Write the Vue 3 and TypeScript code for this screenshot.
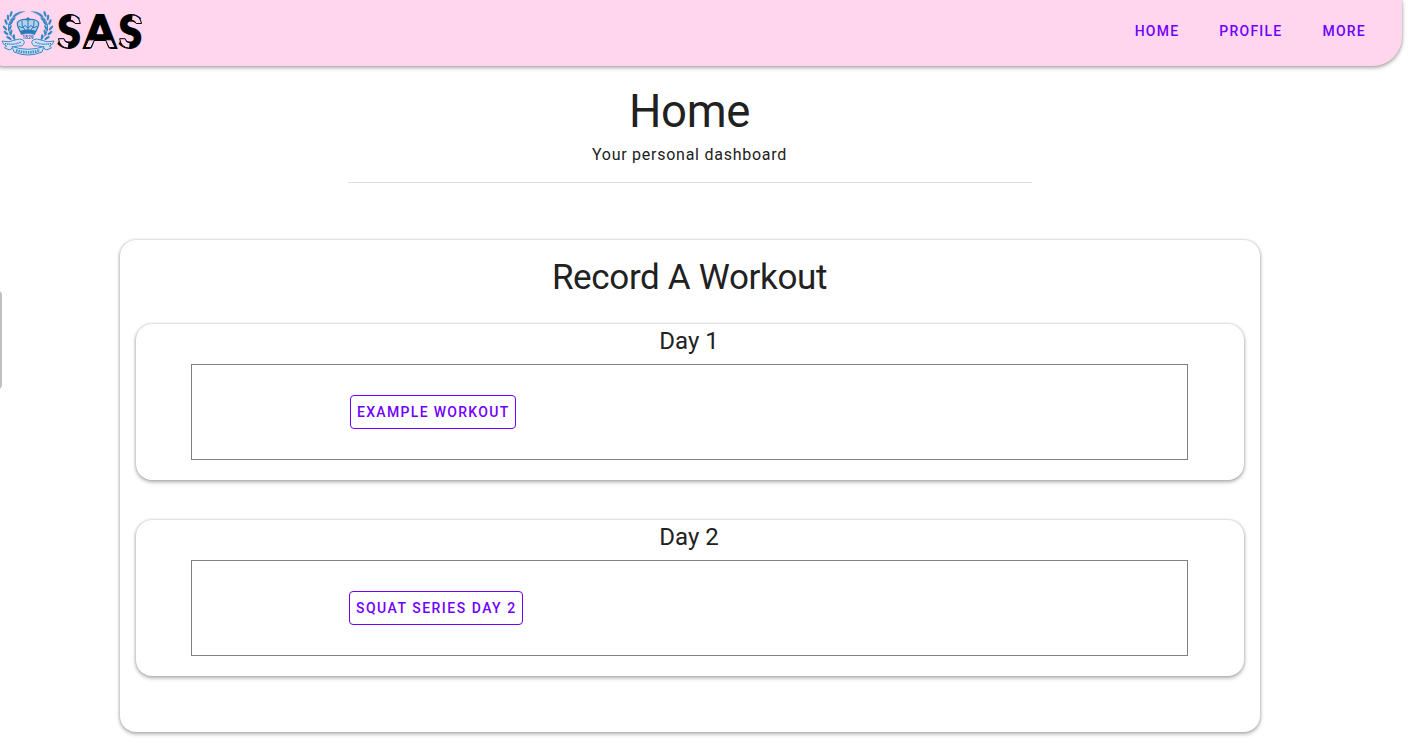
<script setup lang="ts">
interface WorkoutDay {
  title: string
  workout: string
  size: string
}

const links: string[] = ['Home', 'Profile', 'More']
const days: WorkoutDay[] = [
  { title: 'Day 1', workout: 'Example Workout', size: 'regular' },
  { title: 'Day 2', workout: 'Squat Series Day 2', size: 'wide' },
]

// Leaves of one laurel branch: x, y, rotation
const leaves: number[][] = [
  [9, 38, -60], [14, 37, -5], [6, 33, -50], [11, 32.5, 15], [5, 28, -40], [10, 28, 28],
  [6, 22, -22], [11, 23, 38], [8, 17.5, -5], [13, 19.5, 48], [11, 14, 18],
]
</script>

<template>
  <div class="page">
    <header class="bar">
      <svg class="logo" width="160" height="66" viewBox="0 0 160 66">
        <g fill="none" stroke="#3a8cc8">
          <g v-for="side in 2" :key="side" :transform="side === 2 ? 'translate(56 0) scale(-1 1)' : undefined">
            <path d="M17 41Q7 34 8.500 25Q11 16 19 13" stroke-width="1" />
            <path d="M13 16Q17 11 25 11.500Q18 13 14 18Z" fill="#3a8cc8" stroke-width=".3" />
            <ellipse
              v-for="(leaf, i) in leaves"
              :key="i"
              rx="1.2"
              ry="3.1"
              fill="#3489c6"
              stroke="none"
              :transform="`translate(${leaf[0]} ${leaf[1]}) rotate(${leaf[2]})`"
            />
            <path d="M2 41Q9 43 15 40Q20 38 23 40Q26 42.500 22 46Q14 45 10 50L4.500 48L6.500 46Q3 45 2 41Z" fill="#d5e0f3" stroke-width="1" />
            <path d="M5 43.500Q13 45.500 21 42" stroke-dasharray="1.3 .8" stroke-width="1.6" />
          </g>
          <path d="M12 46.500Q28 52 44 46.500L42 52Q28 58 14 52Z" fill="#d5e0f3" stroke-width="1" />
          <path d="M16 50.300Q28 54.300 40 50.300" stroke-dasharray="1.5 .9" stroke-width="2.8" />
          <path d="M20.500 32L18.500 28Q15.500 22 20 20.500Q24.500 18.500 28 20Q31.500 18.500 36 20.500Q40.500 22 37.500 28L35.500 32Q28 29 20.500 32Z" fill="#b5d0eb" stroke="#2877b8" stroke-width="1.3" />
          <path d="M20.500 31Q28 28.500 35.500 31L35 34.500Q28 32.500 21 34.500Z" fill="#2877b8" stroke="#2877b8" stroke-width=".5" />
          <path d="M28 17V30M26.300 18.500H29.700M22 21Q21 26 25 30M34 21Q35 26 31 30M19 26L22 28L25 25.500L28 28L31 25.500L34 28L37 26" stroke="#2877b8" />
        </g>
        <text x="28" y="39.300" class="crest-year" text-anchor="middle">1829</text>
        <g class="wordmark">
          <text x="57.500" y="48" textLength="23" lengthAdjust="spacingAndGlyphs">S</text>
          <text x="84" y="48" textLength="32" lengthAdjust="spacingAndGlyphs">A</text>
          <text x="118.700" y="48" textLength="23" lengthAdjust="spacingAndGlyphs">S</text>
        </g>
        <g fill="#ffd6ee" stroke="#000" stroke-width="1">
          <g v-for="offset in [0, 61.2]" :key="offset" :transform="`translate(${offset} 0)`">
            <path d="M71 14.800Q79 15.500 80.300 23.500H75Q74 20.500 70.300 20Z" />
            <path d="M58.500 38.700H64Q64.500 42.500 69 43L68.300 48.200Q59.500 47.500 58.500 38.700Z" />
          </g>
          <path d="M88.500 39.800H94.500L91 47.600H85Z" />
          <path d="M105.500 39.800H111.500L115.200 47.600H109Z" />
        </g>
      </svg>
      <nav class="links">
        <a v-for="link in links" :key="link">{{ link }}</a>
      </nav>
    </header>

    <span class="drawer-handle"></span>

    <main class="content">
      <section class="intro">
        <h1>Home</h1>
        <p>Your personal dashboard</p>
      </section>
      <section class="card board">
        <h2>Record A Workout</h2>
        <article v-for="day in days" :key="day.title" class="card day">
          <h3>{{ day.title }}</h3>
          <div class="slot">
            <div class="cell" :class="day.size">
              <button type="button">{{ day.workout }}</button>
            </div>
          </div>
        </article>
      </section>
    </main>
  </div>
</template>

<style>
body {
  background: #fff;
  overflow: hidden;
}
</style>

<style scoped>
.page {
  box-sizing: border-box;
  height: 755px;
  overflow: hidden;
  font-family: Roboto, sans-serif;
  color: #212121;
}
.bar,
.card {
  box-shadow: 0 2px 4px rgba(0, 0, 0, 0.3), 0 0 3px rgba(0, 0, 0, 0.22);
}
.bar {
  box-sizing: border-box;
  width: 1422px;
  height: 66px;
  margin-left: -20px;
  padding: 0 36px 0 20px;
  display: flex;
  align-items: flex-start;
  justify-content: space-between;
  background: #ffd6ee;
  border-radius: 0 0 29px 25px;
}
.logo {
  display: block;
}
.crest-year {
  font: 700 5px Roboto, sans-serif;
  fill: #2674b8;
}
.wordmark {
  font: 900 46px Lato, sans-serif;
  fill: #000;
  stroke: #000;
  stroke-width: 1.8px;
}
.links {
  display: flex;
  gap: 40px;
  padding-top: 20px;
}
.links a,
button {
  font: 500 14px/22px Roboto, sans-serif;
  letter-spacing: 1.23px;
  text-transform: uppercase;
  color: #7000ff;
}
.drawer-handle {
  position: absolute;
  left: -6px;
  top: 291px;
  width: 8px;
  height: 98px;
  border-radius: 4px;
  background: #c0c0c0;
}
.content {
  width: 1140px;
  margin-left: 120px;
}
.intro {
  box-sizing: border-box;
  width: 684px;
  height: 117px;
  margin: 0 auto 57px;
  padding-top: 21px;
  border-bottom: 1px solid #dcdcdc;
  text-align: center;
}
h1,
h2,
h3,
p {
  margin: 0;
  font-weight: 400;
  text-align: center;
}
h1 {
  padding-right: 1px;
  font-size: 45.5px;
  line-height: 50px;
  letter-spacing: -0.3px;
}
p {
  margin-top: 6px;
  padding-right: 1px;
  font-size: 16px;
  line-height: 24px;
  letter-spacing: 0.74px;
}
.card {
  background: #fff;
  border-radius: 16px;
}
.board {
  box-sizing: border-box;
  height: 492px;
  padding: 18px 16px 0;
}
h2 {
  height: 66px;
  padding-right: 1px;
  font-size: 35px;
  line-height: 40px;
  letter-spacing: -0.34px;
}
.day {
  height: 156px;
  margin-bottom: 40px;
}
h3 {
  height: 40px;
  padding-right: 2px;
  font-size: 24px;
  line-height: 35px;
}
.slot {
  box-sizing: border-box;
  width: 997px;
  height: 96px;
  margin-left: 55px;
  border: 1px solid #808080;
  display: flex;
  align-items: center;
}
.cell {
  display: flex;
}
.regular {
  padding-left: 158px;
  letter-spacing: 1.31px;
}
.wide {
  padding-left: 157px;
  letter-spacing: 1.49px;
}
button {
  box-sizing: border-box;
  height: 34px;
  padding: 0 5px 0 6px;
  border: 1px solid #7000ff;
  border-radius: 4px;
  background: transparent;
  white-space: nowrap;
  letter-spacing: inherit;
}
</style>
